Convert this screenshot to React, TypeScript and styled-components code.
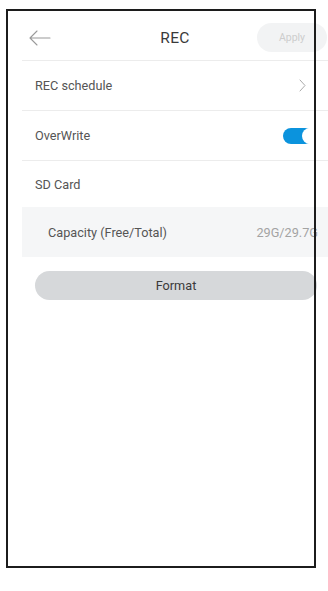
import React from 'react';
import styled, { createGlobalStyle } from 'styled-components';

const GlobalStyle = createGlobalStyle`
  html, body {
    margin: 0;
    padding: 0;
    background: #ffffff;
  }
  body {
    font-family: Roboto, "Noto Sans", "Liberation Sans", sans-serif;
    color: #444;
    overflow: hidden;
  }
`;

const Page = styled.div`
  width: 328px;
  height: 591px;
  padding: 9px 0 0 6px;
  box-sizing: border-box;
  overflow: hidden;
`;

const Frame = styled.div`
  position: relative;
  width: 310px;
  height: 559px;
  box-sizing: border-box;

  &::after {
    content: '';
    position: absolute;
    inset: 0;
    border: 2px solid #1c1c1c;
    pointer-events: none;
    z-index: 2;
  }
`;

const Screen = styled.div`
  width: 306px;
  margin-left: 16px;
  padding-top: 2px;
`;

const Header = styled.div`
  display: grid;
  grid-template-columns: 1fr auto 1fr;
  align-items: center;
  height: 50px;
  padding-top: 4px;
  box-sizing: border-box;
  border-bottom: 1px solid #ececec;
`;

const BackButton = styled.div`
  justify-self: start;
  margin-left: 7px;
  display: flex;
  align-items: center;
`;

const Title = styled.div`
  font-size: 15.5px;
  color: #3a3a3a;
  letter-spacing: 0.3px;
`;

const ApplyButton = styled.div`
  justify-self: end;
  margin-right: 1px;
  width: 70px;
  height: 29px;
  border-radius: 15px;
  background: #f2f3f4;
  color: #cdcdcd;
  font-size: 10.5px;
  display: flex;
  align-items: center;
  justify-content: center;
`;

const Row = styled.div<{ $height?: number; $divider?: boolean; $shaded?: boolean; $indent?: number; $right?: number }>`
  display: flex;
  align-items: center;
  justify-content: space-between;
  height: ${p => p.$height ?? 49}px;
  padding: 0 ${p => p.$right ?? 22}px 0 ${p => p.$indent ?? 13}px;
  border-bottom: ${p => (p.$divider ? '1px solid #ececec' : 'none')};
  background: ${p => (p.$shaded ? '#f5f6f7' : 'transparent')};
  font-size: 12.7px;
  color: #555;
`;

const Value = styled.span`
  color: #a3a3a3;
`;

const Toggle = styled.div<{ $on?: boolean }>`
  position: relative;
  width: 30px;
  height: 16px;
  border-radius: 8px;
  background: ${p => (p.$on ? '#0b93dd' : '#d6d6d6')};
  margin-right: 5px;

  &::after {
    content: '';
    position: absolute;
    top: 0;
    right: -5px;
    width: 16px;
    height: 16px;
    border-radius: 50%;
    background: #ffffff;
  }
`;

const FormatButton = styled.div`
  margin: 14px 11px 0 13px;
  height: 29px;
  border-radius: 15px;
  background: #d6d8da;
  color: #3a3a3a;
  font-size: 12.7px;
  display: flex;
  align-items: center;
  justify-content: center;
`;

const BackArrow = () => (
  <svg width="22" height="16" viewBox="0 0 22 16" fill="none">
    <path d="M1 8 H21 M1 8 L8 1 M1 8 L8 15" stroke="#9a9a9a" strokeWidth="1.1" strokeLinecap="round" />
  </svg>
);

const Chevron = () => (
  <svg width="7" height="13" viewBox="0 0 7 13" fill="none">
    <path d="M1 1 L6 6.5 L1 12" stroke="#aaaaaa" strokeWidth="1" strokeLinecap="round" />
  </svg>
);

export default function App() {
  return (
    <>
      <GlobalStyle />
      <Page>
        <Frame>
          <Screen>
            <Header>
              <BackButton>
                <BackArrow />
              </BackButton>
              <Title>REC</Title>
              <ApplyButton>Apply</ApplyButton>
            </Header>
            <Row $divider>
              <span>REC schedule</span>
              <Chevron />
            </Row>
            <Row $divider $right={10}>
              <span>OverWrite</span>
              <Toggle $on />
            </Row>
            <Row $height={46}>
              <span>SD Card</span>
            </Row>
            <Row $height={50} $shaded $indent={26} $right={10}>
              <span>Capacity (Free/Total)</span>
              <Value>29G/29.7G</Value>
            </Row>
            <FormatButton>Format</FormatButton>
          </Screen>
        </Frame>
      </Page>
    </>
  );
}
